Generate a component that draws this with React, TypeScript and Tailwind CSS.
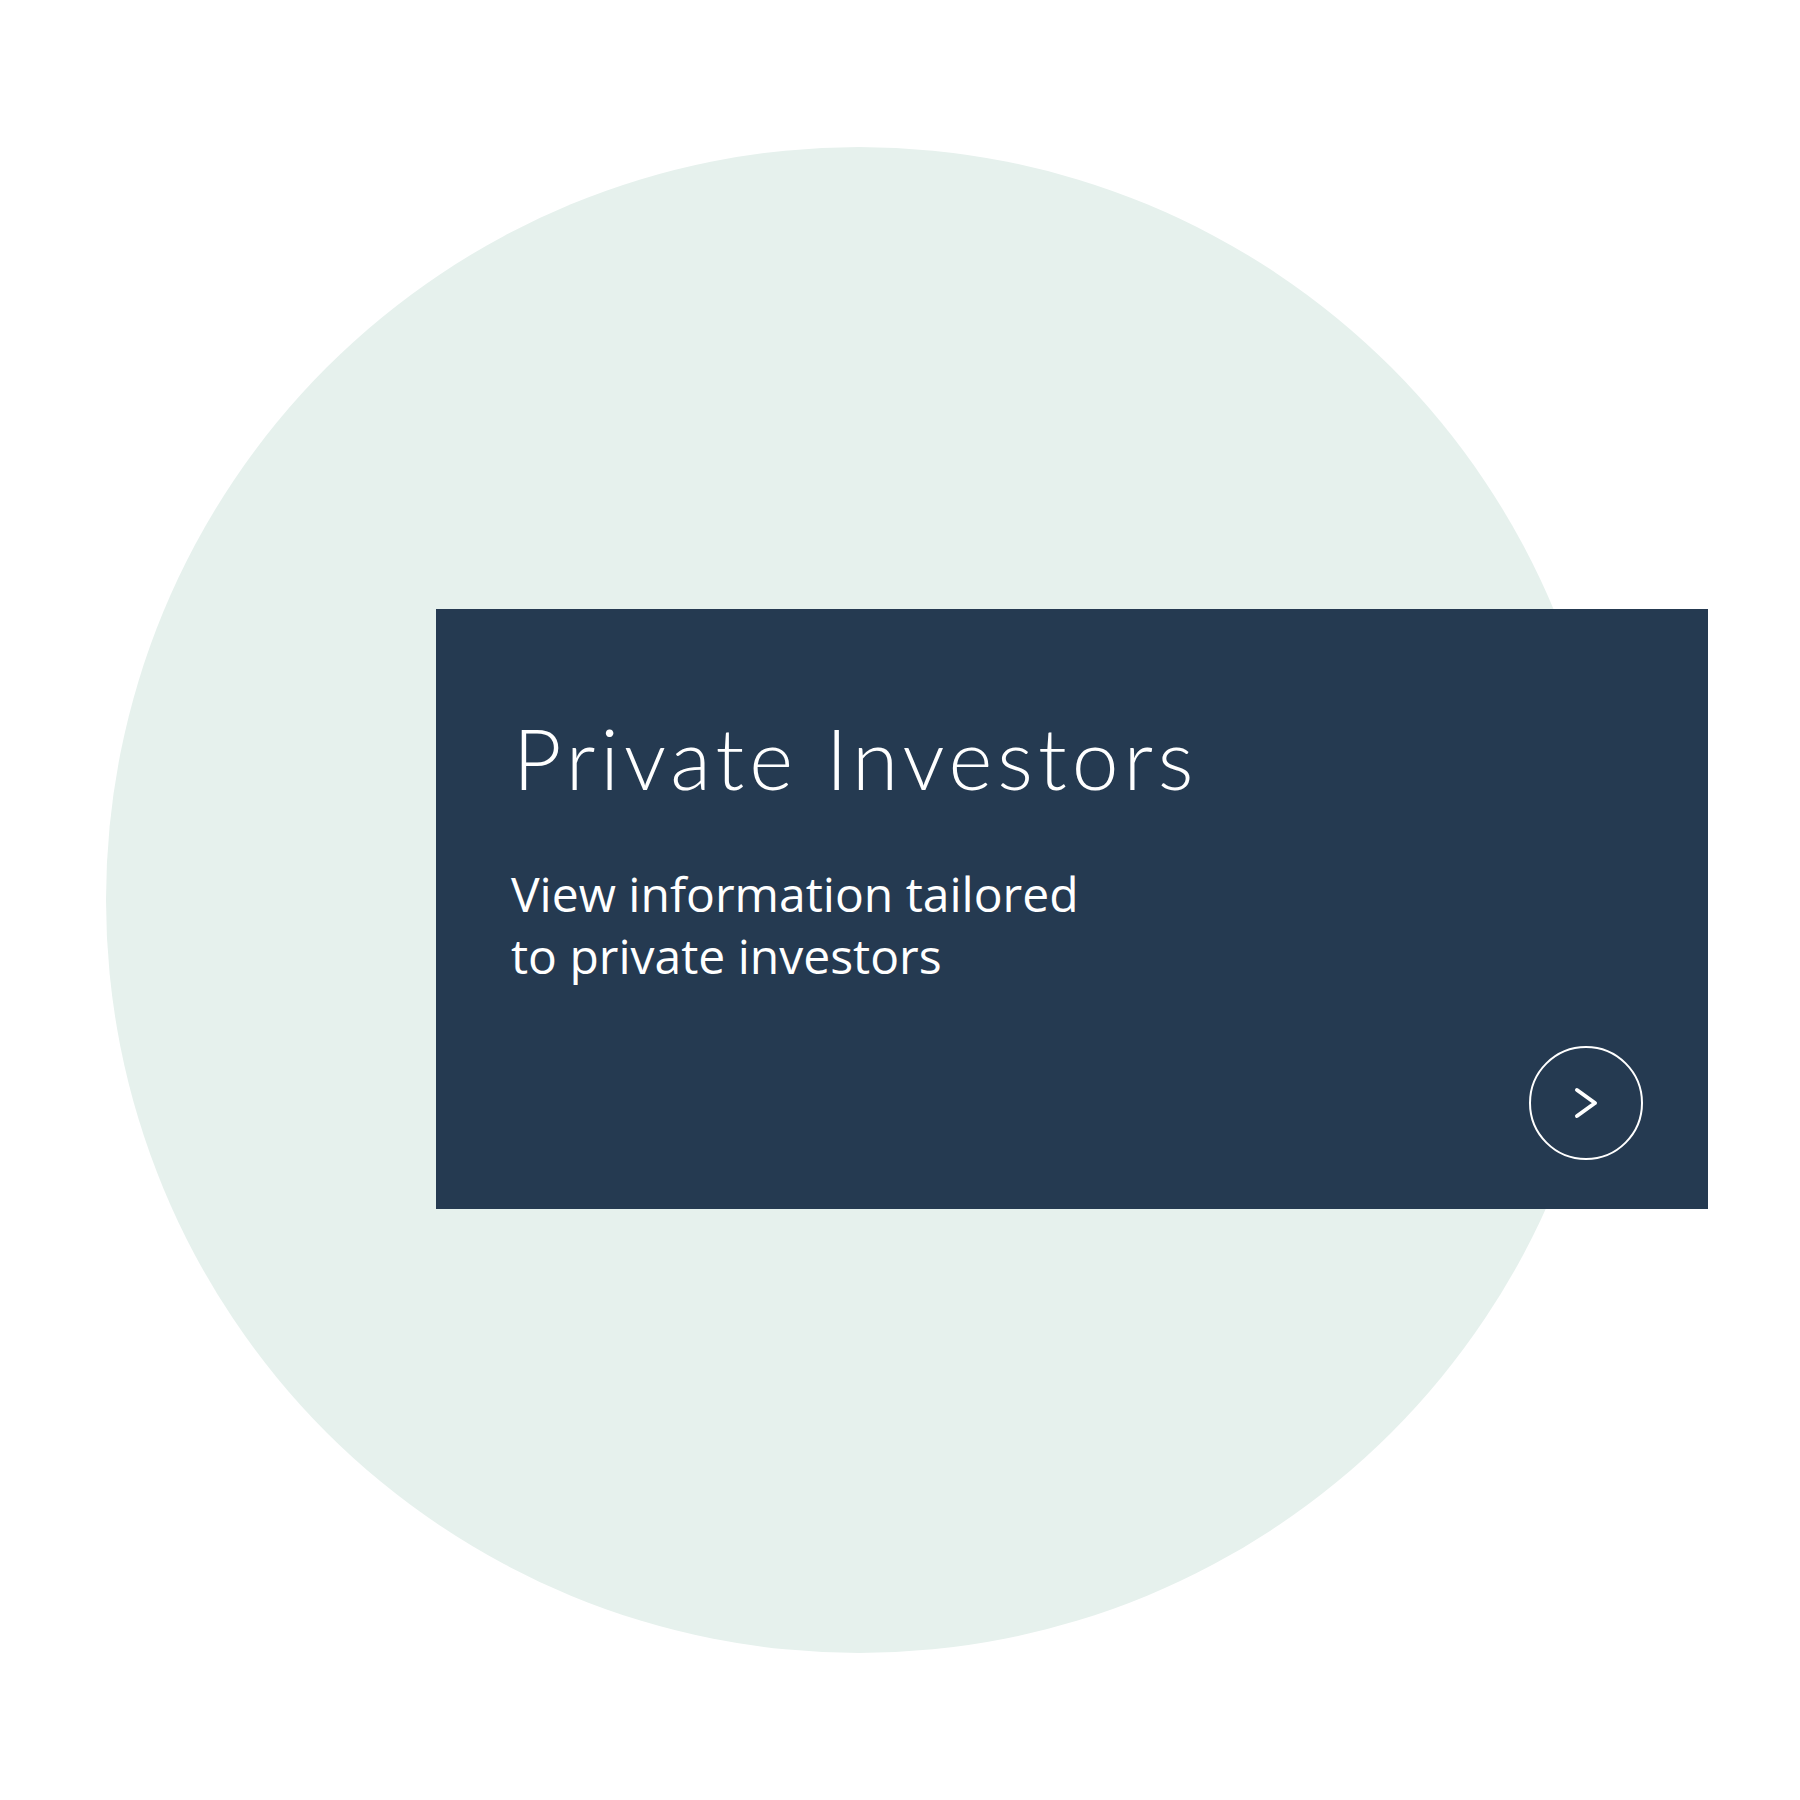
export default function App() {
  return (
    <div className="w-[1800px] h-[1800px] bg-white pt-[147px] pl-[106px]">
      <div className="grid">
        {/* soft backdrop circle */}
        <div className="[grid-area:1/1] w-[1506px] h-[1506px] rounded-full bg-[#e6f1ed]" />

        {/* Card */}
        <div className="[grid-area:1/1] self-start justify-self-start ml-[330px] mt-[462px] w-[1272px] h-[600px] bg-[#253a51] flex flex-col pl-[75px] pr-[65px] pt-[107px] pb-[49px] text-white">
          <h1
            className="pl-[2px] text-[84px] leading-none font-light tracking-[5px]"
            style={{ fontFamily: 'Lato, "Open Sans", sans-serif' }}
          >
            Private Investors
          </h1>
          <p
            className="mt-[63px] text-[48px] leading-[62px]"
            style={{ fontFamily: '"Open Sans", "Noto Sans", sans-serif' }}
          >
            View information tailored
            <br />
            to private investors
          </p>
          <button className="mt-auto self-end w-[114px] h-[114px] rounded-full border-2 border-white flex items-center justify-center">
            <svg width="26" height="34" viewBox="0 0 26 34" fill="none" stroke="white" strokeWidth="4" strokeLinecap="round" strokeLinejoin="round">
              <path d="M4 4 L22 17 L4 30" />
            </svg>
          </button>
        </div>
      </div>
    </div>
  );
}
